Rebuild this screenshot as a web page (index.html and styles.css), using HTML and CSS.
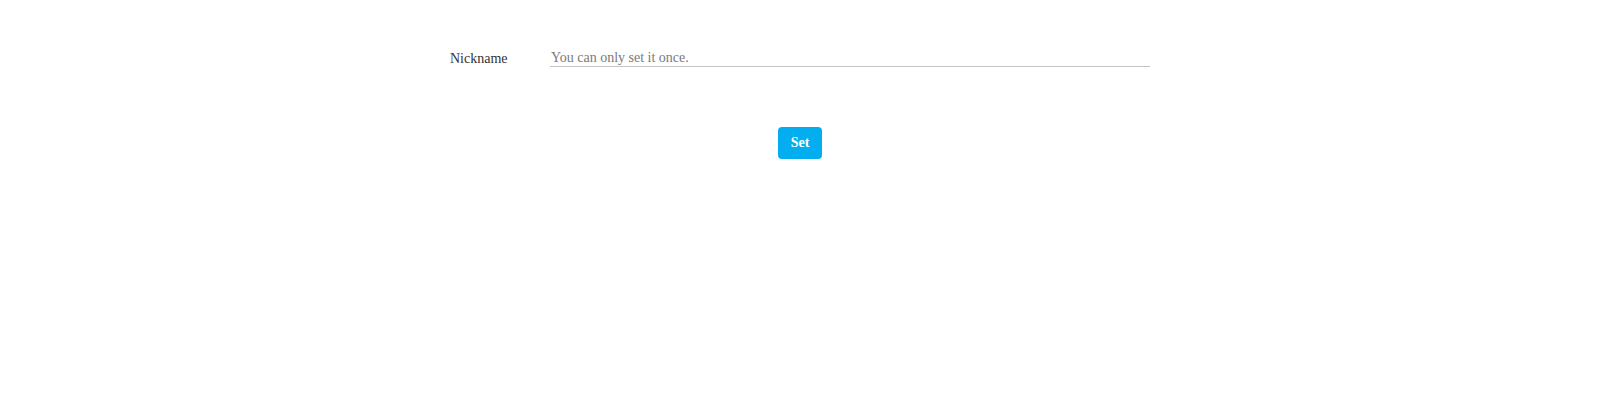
FILE: index.html
```html
<!DOCTYPE html>
<html>
<head>
<meta charset="utf-8">
<link rel="stylesheet" href="styles.css">
</head>
<body>
<div class="page">
  <form class="form">
    <div class="row">
      <label class="label" for="nick">Nickname</label>
      <input class="input" id="nick" type="text" placeholder="You can only set it once.">
    </div>
    <div class="actions">
      <button class="btn" type="button">Set</button>
    </div>
  </form>
</div>
</body>
</html>
```
FILE: styles.css
```css
html, body {
  margin: 0;
  padding: 0;
  background: #ffffff;
}
body {
  font-family: "Liberation Serif", "Times New Roman", serif;
  font-size: 14px;
  color: #333333;
}
.page {
  display: flex;
  justify-content: center;
  padding-top: 46px;
}
.form {
  width: 700px;
  display: flex;
  flex-direction: column;
}
.row {
  display: flex;
  align-items: flex-end;
}
.label {
  width: 100px;
  flex: none;
  line-height: 16px;
  padding-bottom: 0;
  color: #333333;
}
.input {
  flex: 1;
  height: 21px;
  box-sizing: border-box;
  border: none;
  border-bottom: 1px solid #c4c4c4;
  padding: 4px 1px 0;
  margin: 0;
  font-family: inherit;
  font-size: 14px;
  color: #333333;
  outline: none;
  background: transparent;
}
.input::placeholder {
  color: #7a7a7a;
}
.actions {
  display: flex;
  justify-content: center;
  margin-top: 60px;
}
.btn {
  height: 32px;
  width: 44px;
  padding: 0;
  border: none;
  border-radius: 4px;
  background: #03aef0;
  color: #ffffff;
  font-family: inherit;
  font-size: 14px;
  font-weight: bold;
  cursor: pointer;
}
```
